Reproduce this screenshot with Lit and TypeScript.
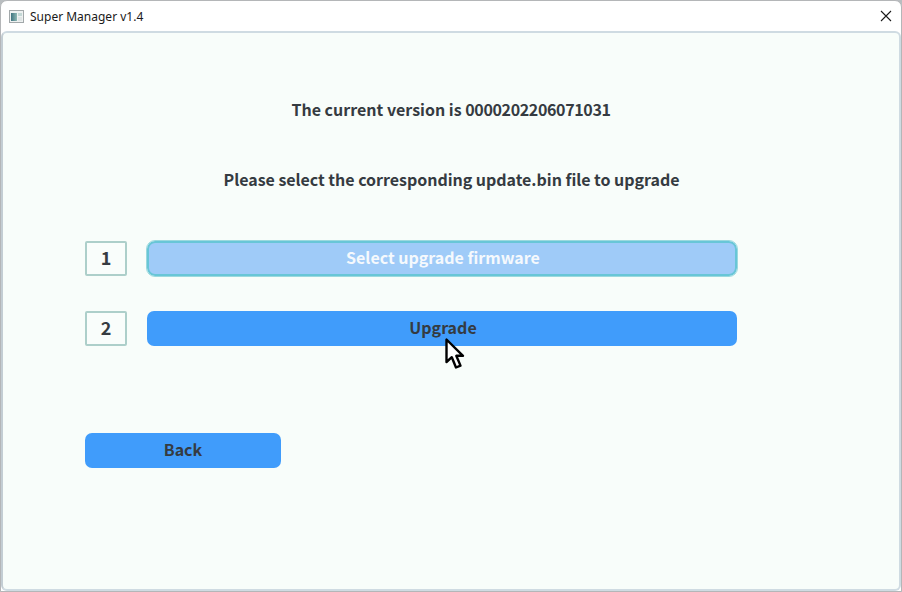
import { LitElement, html, css } from "lit";
import { customElement } from "lit/decorators.js";

@customElement("app-root")
export class AppRoot extends LitElement {
  static styles = css`
    :host { display: block; width: 902px; height: 592px; background: #b9bdc0; }
    .window {
      box-sizing: border-box; width: 902px; height: 592px; background: #fff;
      border: 1px solid #b4b6b8; border-radius: 7px 7px 0 0; display: flex; flex-direction: column;
      position: relative; overflow: hidden;
    }
    .titlebar {
      height: 30px; flex: none; display: flex; align-items: center; padding: 0 8px;
      color: #1a1a1a; gap: 6px;
    }
    .appicon { width: 15px; height: 13px; flex: none; }
    .title { flex: 1; font-family: "Noto Sans", sans-serif; font-size: 12px; }
    .close { width: 12px; height: 12px; flex: none; margin-right: 1px; }
    .panel {
      flex: 1; box-sizing: border-box; background: #f8fdfa;
      border: 2px solid #cfdbe2; border-left-color: #c3cdd3; border-radius: 6px;
      padding: 0 0 0 82px; display: flex; flex-direction: column;
      font-family: "Noto Sans CJK SC", "Noto Sans", sans-serif; font-weight: 700; color: #353b41; font-size: 16px;
    }
    .msg { height: 24px; line-height: 24px; width: 732px; text-align: center; flex: none; }
    .msg.first { margin-top: 64px; }
    .msg.second { margin-top: 46px; padding-left: 1px; box-sizing: border-box; letter-spacing: -0.03px; }
    .digits { letter-spacing: -0.36px; }
    .row { display: flex; gap: 20px; height: 35px; flex: none; margin-top: 35px; }
    .row.r1 { margin-top: 50px; }
    .num {
      box-sizing: border-box; width: 42px; height: 35px; border: 2px solid #adcfca; border-radius: 2px;
      display: flex; align-items: center; justify-content: center; font-size: 18px; background: #f9fdfb;
      line-height: 28px; padding-bottom: 4px;
    }
    .btn {
      appearance: none; border: 0; margin: 0; padding: 0 0 4px 2px; font: inherit; color: inherit;
      background: #409cfb; border-radius: 7px; height: 35px; width: 590px;
      box-sizing: border-box;
    }
    .btn.sel {
      background: #9fcbf8; color: #f5f9fd; border: 2px solid #68c6d7;
      outline: 1px solid #9bd9de; outline-offset: 0; border-radius: 8px;
    }
    .btn.back { width: 196px; margin-top: 87px; flex: none; padding-left: 0; }
    .cursor { position: absolute; left: 442px; top: 336px; width: 24px; height: 34px; }
  `;

  render() {
    return html`
      <div class="window">
        <div class="titlebar">
          <svg class="appicon" viewBox="0 0 15 13">
            <defs>
              <linearGradient id="ic" x1="0" y1="0" x2="1" y2="0">
                <stop offset="0" stop-color="#3f7480" />
                <stop offset="1" stop-color="#8fb8b4" />
              </linearGradient>
            </defs>
            <rect x="0.5" y="0.5" width="14" height="12" fill="#eef1f1" stroke="#a2a8aa" />
            <rect x="2" y="3" width="6" height="8" fill="url(#ic)" />
            <rect x="9" y="3" width="4" height="3" fill="#c4d8d6" />
            <rect x="9" y="7" width="4" height="4" fill="#dfe5e5" />
          </svg>
          <span class="title">Super Manager v1.4</span>
          <svg class="close" viewBox="0 0 12 12">
            <path d="M1 1 L11 11 M11 1 L1 11" stroke="#1a1a1a" stroke-width="1.1" fill="none" />
          </svg>
        </div>
        <div class="panel">
          <div class="msg first">The current version is <span class="digits">0000202206071031</span></div>
          <div class="msg second">Please select the corresponding update.bin file to upgrade</div>
          <div class="row r1">
            <div class="num">1</div>
            <button class="btn sel">Select upgrade firmware</button>
          </div>
          <div class="row">
            <div class="num">2</div>
            <button class="btn">Upgrade</button>
          </div>
          <button class="btn back">Back</button>
        </div>
        <svg class="cursor" viewBox="0 0 24 34">
          <path d="M3.5 2.5 L3.5 25 L8.8 20.2 L13 30.5 L17.5 28.6 L13.3 18.8 L20 18.8 Z" fill="#fff" stroke="#000" stroke-width="2.4" stroke-linejoin="round" />
        </svg>
      </div>
    `;
  }
}
